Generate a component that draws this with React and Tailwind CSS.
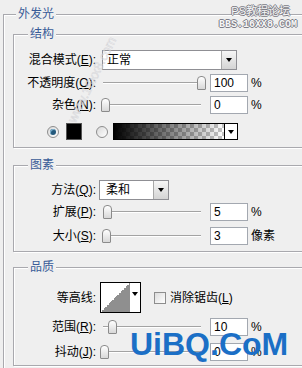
import React from 'react';

const BG = 'bg-[#efefef]';

function Group({ title, className = '', legendClass = 'ml-[14px]', children }) {
  return (
    <fieldset
      className={`border border-[#a9a9ae] shadow-[inset_1px_1px_0_#fff,1px_1px_0_#fff] ${className}`}
    >
      <legend className={`${legendClass} px-[2px] ${BG} leading-[16px] text-[#3a5c98]`}>{title}</legend>
      {children}
    </fieldset>
  );
}

function Label({ text, keyChar }) {
  return (
    <div className="w-[82px] shrink-0 text-right whitespace-nowrap">
      {text}(<u>{keyChar}</u>):
    </div>
  );
}

function Arrow() {
  return <div className="w-0 h-0 border-x-[3.5px] border-x-transparent border-t-[4px] border-t-black" />;
}

function Select({ value, width, pad }) {
  return (
    <div className={`flex h-full shrink-0 bg-white border border-[#8f8f94] ${width}`}>
      <div className={`flex-1 leading-[18px] ${pad}`}>{value}</div>
      <div className="w-[15px] flex items-center justify-center border-l border-[#a8a8a8] bg-linear-to-b from-[#f6f6f6] to-[#d4d4d4]">
        <Arrow />
      </div>
    </div>
  );
}

function Slider({ at }) {
  return (
    <div className="relative w-[104px] h-[14px] shrink-0">
      <div className="absolute left-[3px] right-[3px] top-[6px] h-[2px] border-t border-t-[#a3a3a3] border-b border-b-white" />
      <div
        className="absolute top-0 w-[9px] h-[14px] rounded-t-[4px] rounded-b-[1px] border border-[#8b8b8b] bg-linear-to-b from-white to-[#d8d8d8]"
        style={{ left: at }}
      />
    </div>
  );
}

function NumBox({ value }) {
  return (
    <div className="w-[38px] h-[18px] shrink-0 bg-white border border-[#a3a8b0] pl-[3px] leading-[16px]">
      {value}
    </div>
  );
}

function SliderRow({ text, keyChar, at, value, unit, className }) {
  return (
    <div className={`flex items-center h-[18px] ${className}`}>
      <Label text={text} keyChar={keyChar} />
      <div className="ml-[4px]">
        <Slider at={at} />
      </div>
      <div className="ml-[6px]">
        <NumBox value={value} />
      </div>
      <span className="ml-[3px] whitespace-nowrap">{unit}</span>
    </div>
  );
}

function Radio({ checked }) {
  return (
    <div className="w-[12px] h-[12px] shrink-0 rounded-full border border-[#8d8d8d] bg-linear-to-br from-[#d9d9d9] to-white flex items-center justify-center">
      {checked && <div className="w-[6px] h-[6px] rounded-full bg-[#24597c] shadow-[inset_1px_1px_0_#7fb2cf]" />}
    </div>
  );
}

export default function App() {
  return (
    <div className={`relative w-[302px] h-[368px] overflow-hidden ${BG} pt-[6px] text-[12px] text-black font-['Liberation_Sans','Noto_Sans_CJK_SC',sans-serif]`}>
      <Group title="外发光" legendClass="ml-[12px]" className="ml-[3px] w-[340px] pb-[30px]">
        {/* 结构 */}
        <Group title="结构" className="mt-[4px] ml-[9px] mr-[9px] pb-[7px]">
          <div className="flex items-center h-[20px] mt-[8px]">
            <Label text="混合模式" keyChar="E" />
            <div className="ml-[6px] h-full">
              <Select value="正常" width="w-[135px]" pad="pl-[4px]" />
            </div>
          </div>
          <SliderRow text="不透明度" keyChar="O" at={97} value="100" unit="%" className="mt-[4px]" />
          <SliderRow text="杂色" keyChar="N" at={1} value="0" unit="%" className="mt-[4px]" />
          <div className="flex items-center h-[17px] mt-[9px]">
            <div className="ml-[33px]">
              <Radio checked />
            </div>
            <div className="ml-[7px] w-[16px] h-[17px] bg-black border border-[#555]" />
            <div className="ml-[14px]">
              <Radio />
            </div>
            <div className="ml-[5px] flex w-[125px] h-[17px] border border-black">
              <div className="flex-1 bg-[conic-gradient(#c4c4c4_25%,#fff_0_50%,#c4c4c4_0_75%,#fff_0)] bg-[length:8px_8px]">
                <div className="h-full bg-linear-to-r from-black to-transparent" />
              </div>
              <div className="w-[13px] flex items-center justify-center border-l border-black bg-white">
                <Arrow />
              </div>
            </div>
          </div>
        </Group>

        {/* 图素 */}
        <Group title="图素" className="mt-[9px] ml-[9px] mr-[9px] pb-[6px]">
          <div className="flex items-center h-[20px] mt-[7px]">
            <Label text="方法" keyChar="Q" />
            <div className="ml-[3px] h-full">
              <Select value="柔和" width="w-[70px]" pad="pl-[6px]" />
            </div>
          </div>
          <SliderRow text="扩展" keyChar="P" at={3} value="5" unit="%" className="mt-[3px]" />
          <SliderRow text="大小" keyChar="S" at={2} value="3" unit="像素" className="mt-[6px]" />
        </Group>

        {/* 品质 */}
        <Group title="品质" className="mt-[7px] ml-[9px] mr-[9px] pb-[4px]">
          <div className="flex items-center h-[31px] mt-[7px]">
            <div className="w-[82px] shrink-0 text-right">等高线:</div>
            <div className="ml-[4px] flex w-[41px] h-[31px] border border-black bg-white">
              <div className="flex-1 bg-[linear-gradient(to_top_left,#8f8f8f_50%,#fff_50%)]" />
              <div className="w-[10px] pt-[9px] flex justify-center">
                <Arrow />
              </div>
            </div>
            <div className="ml-[13px] w-[12px] h-[12px] border border-[#8d8d8d] bg-linear-to-br from-[#dcdcdc] to-white" />
            <span className="ml-[4px] whitespace-nowrap">
              消除锯齿(<u>L</u>)
            </span>
          </div>
          <SliderRow text="范围" keyChar="R" at={8} value="10" unit="%" className="mt-[5px]" />
          <SliderRow text="抖动" keyChar="J" at={0} value="0" unit="%" className="mt-[7px]" />
        </Group>
      </Group>

      {/* faint diagonal site mark */}
      <div className="absolute left-[32px] top-[70px] w-[120px] text-center -rotate-[64deg] text-[13px] text-transparent [-webkit-text-stroke:0.5px_#d6d6da] font-['Liberation_Sans',sans-serif] pointer-events-none">
        www.16xx8.com
      </div>

      {/* forum mark top right */}
      <div className="absolute right-[5px] top-[6px] flex flex-col items-end leading-none text-[#f6f6f6] [text-shadow:1px_0_#7c7c86,-1px_0_#7c7c86,0_1px_#7c7c86,0_-1px_#7c7c86] pointer-events-none">
        <div className="text-[11px] mr-[7px]">PS教程论坛</div>
        <div className="mt-[3px] text-[10px] font-bold font-['Liberation_Mono',monospace]">BBS.16XX8.COM</div>
      </div>

      {/* UiBQ watermark */}
      <div className="absolute left-[130px] top-[328px] text-[32px] font-bold leading-none text-[#1b6fc6] font-['Liberation_Sans',sans-serif] pointer-events-none">
        UiBQ.CoM
      </div>
    </div>
  );
}
